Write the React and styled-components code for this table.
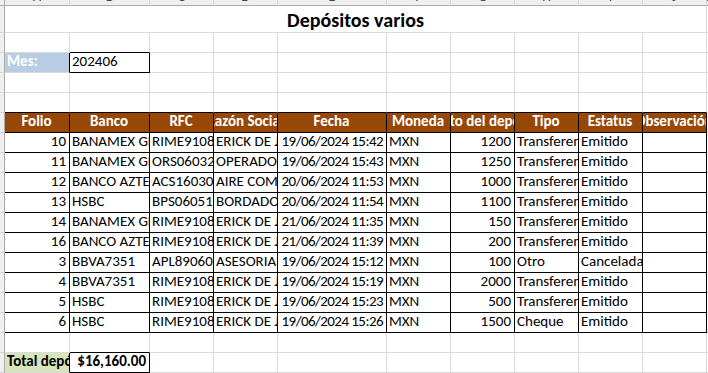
import React from 'react';
import styled, { createGlobalStyle } from 'styled-components';

const GRID = '#dadada';
const HEAD_LINE = '#ababab';
const HEAD_SEP = '#d4d4d4';
const BLACK = '#000000';
const BROWN = '#974706';
const BLUE = '#b8cce4';
const GREEN = '#d8e4bc';

const Global = createGlobalStyle`
  html, body { margin: 0; padding: 0; background: #ffffff; }
  body { font-family: "Carlito", "Lato", "Liberation Sans", sans-serif; }
`;

const Sheet = styled.div`
  display: grid;
  grid-template-columns: 5px 65px 80px 64px 64px 109px 64px 64px 64px 64px 64px 1fr;
  grid-template-rows: 6px 27px repeat(17, 20px);
  width: 708px;
  height: 373px;
  overflow: hidden;
  background: #ffffff;
  font-size: 15px;
  color: #000000;
`;

const Corner = styled.div`
  box-sizing: border-box;
  background: #efefef;
  border-right: 1px solid ${HEAD_LINE};
  border-bottom: 1px solid ${HEAD_LINE};
`;

const ColHeader = styled.div`
  box-sizing: border-box;
  background: #efefef;
  border-right: 1px solid ${HEAD_SEP};
  border-bottom: 1px solid ${HEAD_LINE};
  display: flex;
  justify-content: center;
  align-items: flex-end;
  overflow: hidden;
  color: #444444;
  font-size: 14px;
`;

const ColLetter = styled.span`
  line-height: 1;
  margin-bottom: 1px;
`;

const RowHeader = styled.div`
  box-sizing: border-box;
  background: #efefef;
  border-right: 1px solid ${HEAD_LINE};
  border-bottom: 1px solid ${HEAD_SEP};
`;

const Cell = styled.div`
  box-sizing: border-box;
  border-right: 1px solid ${(p) => (p.$rb ? BLACK : GRID)};
  border-bottom: 1px solid ${(p) => (p.$bb ? BLACK : GRID)};
  background: ${(p) => p.$bg || 'transparent'};
  color: ${(p) => p.$fg || '#000000'};
  font-weight: ${(p) => (p.$bold ? 700 : 400)};
  display: flex;
  align-items: flex-end;
  justify-content: ${(p) =>
    p.$align === 'right' ? 'flex-end' : p.$align === 'center' ? 'center' : 'flex-start'};
  padding: 0 3px 2px 2px;
  white-space: nowrap;
  overflow: hidden;
  line-height: 17px;
  letter-spacing: ${(p) => (p.$tight ? '-0.55px' : 'normal')};
`;

const TitleCell = styled.div`
  grid-column: 2 / 12;
  box-sizing: border-box;
  border-right: 1px solid ${GRID};
  border-bottom: 1px solid ${GRID};
  display: flex;
  justify-content: center;
  align-items: flex-end;
  font-size: 20px;
  font-weight: 700;
  line-height: 22px;
  padding-bottom: 1px;
`;

const LETTERS = ['A', 'B', 'C', 'D', 'E', 'F', 'G', 'H', 'I', 'J', 'K'];

const HEAD = [
  'Folio',
  'Banco',
  'RFC',
  'Razón Social',
  'Fecha',
  'Moneda',
  'Monto del depósito',
  'Tipo',
  'Estatus',
  'Observación',
];

const DATA = [
  [10, 'BANAMEX GRUPO FINANCIERO', 'RIME910823AB1', 'ERICK DE JESUS', '19/06/2024 15:42', 'MXN', 1200, 'Transferencia', 'Emitido'],
  [11, 'BANAMEX GRUPO FINANCIERO', 'ORS060324XY2', 'OPERADORA RS', '19/06/2024 15:43', 'MXN', 1250, 'Transferencia', 'Emitido'],
  [12, 'BANCO AZTECA', 'ACS160304AB3', 'AIRE COMPRIMIDO', '20/06/2024 11:53', 'MXN', 1000, 'Transferencia', 'Emitido'],
  [13, 'HSBC', 'BPS060518KL4', 'BORDADOS', '20/06/2024 11:54', 'MXN', 1100, 'Transferencia', 'Emitido'],
  [14, 'BANAMEX GRUPO FINANCIERO', 'RIME910823AB1', 'ERICK DE JESUS', '21/06/2024 11:35', 'MXN', 150, 'Transferencia', 'Emitido'],
  [16, 'BANCO AZTECA', 'RIME910823AB1', 'ERICK DE JESUS', '21/06/2024 11:39', 'MXN', 200, 'Transferencia', 'Emitido'],
  [3, 'BBVA7351', 'APL890605QR5', 'ASESORIAS', '19/06/2024 15:12', 'MXN', 100, 'Otro', 'Cancelada'],
  [4, 'BBVA7351', 'RIME910823AB1', 'ERICK DE JESUS', '19/06/2024 15:19', 'MXN', 2000, 'Transferencia', 'Emitido'],
  [5, 'HSBC', 'RIME910823AB1', 'ERICK DE JESUS', '19/06/2024 15:23', 'MXN', 500, 'Transferencia', 'Emitido'],
  [6, 'HSBC', 'RIME910823AB1', 'ERICK DE JESUS', '19/06/2024 15:26', 'MXN', 1500, 'Cheque', 'Emitido'],
];

const LAST_ROW = 18;
const LAST_COL = 11;

function bordered(r, c) {
  if (r >= 6 && r <= 16 && c >= 1 && c <= 10) return true;
  if ((r === 3 || r === 18) && c === 2) return true;
  return false;
}

function content(r, c) {
  if (r === 3 && c === 1) return { text: 'Mes:', bold: true, bg: BLUE, fg: '#ffffff' };
  if (r === 3 && c === 2) return { text: '202406' };
  if (r === 6 && c >= 1 && c <= 10)
    return { text: HEAD[c - 1], bold: true, bg: BROWN, fg: '#ffffff', align: 'center' };
  if (r >= 7 && r <= 16 && c >= 1 && c <= 10) {
    const row = DATA[r - 7];
    const v = row[c - 1];
    if (v === undefined) return { text: '' };
    const numeric = c === 1 || c === 7;
    if (c === 5) return { text: v, align: 'right', tight: true };
    return { text: String(v), align: numeric ? 'right' : 'left' };
  }
  if (r === 18 && c === 1) return { text: 'Total depósitos', bold: true, bg: GREEN };
  if (r === 18 && c === 2) return { text: '$16,160.00', bold: true, align: 'right' };
  return { text: '' };
}

export default function App() {
  const cells = [];
  cells.push(<Corner key="corner" />);
  LETTERS.forEach((l) =>
    cells.push(
      <ColHeader key={`h-${l}`}>
        <ColLetter>{l}</ColLetter>
      </ColHeader>
    )
  );
  cells.push(<RowHeader key="rh-1" />);
  cells.push(<TitleCell key="title">Depósitos varios</TitleCell>);
  cells.push(<Cell key="k-1" />);
  for (let r = 2; r <= LAST_ROW; r += 1) {
    cells.push(<RowHeader key={`rh-${r}`} />);
    for (let c = 1; c <= LAST_COL; c += 1) {
      const info = content(r, c);
      const rb = bordered(r, c) || bordered(r, c + 1);
      const bb = bordered(r, c) || bordered(r + 1, c);
      cells.push(
        <Cell
          key={`c-${r}-${c}`}
          $rb={rb}
          $bb={bb}
          $bg={info.bg}
          $fg={info.fg}
          $bold={info.bold}
          $align={info.align}
          $tight={info.tight}
        >
          {info.text}
        </Cell>
      );
    }
  }
  return (
    <>
      <Global />
      <Sheet>{cells}</Sheet>
    </>
  );
}
